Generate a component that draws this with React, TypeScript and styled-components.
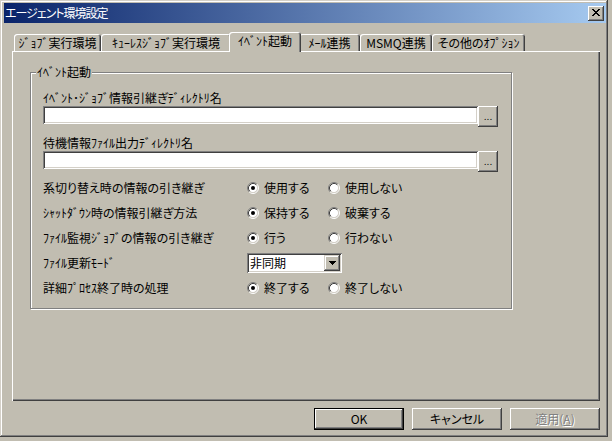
import React from 'react';
import styled, { createGlobalStyle } from 'styled-components';

const FACE = '#c1bdb1';

const GlobalStyle = createGlobalStyle`
  html, body {
    margin: 0;
    padding: 0;
    background: ${FACE};
  }
  body {
    font-family: "Noto Sans CJK JP", "Noto Sans", sans-serif;
    font-size: 12px;
    color: #000;
    font-feature-settings: "palt";
  }
`;

const tabs = [
  { label: 'ｼﾞｮﾌﾞ実行環境', width: 87 },
  { label: 'ｷｭｰﾚｽｼﾞｮﾌﾞ実行環境', width: 130 },
  { label: 'ｲﾍﾞﾝﾄ起動', width: 68, active: true },
  { label: 'ﾒｰﾙ連携', width: 61 },
  { label: 'MSMQ連携', width: 72 },
  { label: 'その他のｵﾌﾟｼｮﾝ', width: 93 }
];

const options = [
  { label: '系切り替え時の情報の引き継ぎ', choices: ['使用する', '使用しない'] },
  { label: 'ｼｬｯﾄﾀﾞｳﾝ時の情報引継ぎ方法', choices: ['保持する', '破棄する'] },
  { label: 'ﾌｧｲﾙ監視ｼﾞｮﾌﾞの情報の引き継ぎ', choices: ['行う', '行わない'] },
  { label: 'ﾌｧｲﾙ更新ﾓｰﾄﾞ', combo: '非同期' },
  { label: '詳細ﾌﾟﾛｾｽ終了時の処理', choices: ['終了する', '終了しない'] }
];

// little pixel drawings
const CloseGlyph = () => (
  <svg width="8" height="7" viewBox="0 0 8 7" shapeRendering="crispEdges">
    <path
      d="M0 0h2v1H0zM6 0h2v1H6zM1 1h2v1H1zM5 1h2v1H5zM2 2h4v1H2zM3 3h2v1H3zM2 4h4v1H2zM1 5h2v1H1zM5 5h2v1H5zM0 6h2v1H0zM6 6h2v1H6z"
      fill="#000"
    />
  </svg>
);

const ArrowGlyph = () => (
  <svg width="7" height="4" viewBox="0 0 7 4" shapeRendering="crispEdges">
    <path d="M0 0h7v1H0zM1 1h5v1H1zM2 2h3v1H2zM3 3h1v1H3z" fill="#000" />
  </svg>
);

const RadioIcon = ({ checked }: { checked?: boolean }) => (
  <svg width="12" height="12" viewBox="0 0 12 12">
    <circle cx="6" cy="6" r="4.5" fill="#fff" />
    <path d="M2.11 9.89A5.5 5.5 0 0 1 9.89 2.11" fill="none" stroke="#808080" />
    <path d="M9.89 2.11A5.5 5.5 0 0 1 2.11 9.89" fill="none" stroke="#fff" />
    <path d="M2.82 9.18A4.5 4.5 0 0 1 9.18 2.82" fill="none" stroke="#404040" />
    <path d="M9.18 2.82A4.5 4.5 0 0 1 2.82 9.18" fill="none" stroke="#d4d0c8" />
    {checked && <circle cx="6" cy="6" r="2" fill="#000" />}
  </svg>
);

export default function App() {
  return (
    <>
      <GlobalStyle />
      <Window>
        <TitleBar>
          <TitleText>エージェント環境設定</TitleText>
          <CloseButton>
            <CloseGlyph />
          </CloseButton>
        </TitleBar>
        <Body>
          <Tabs>
            {tabs.map((t) => (
              <Tab key={t.label} $w={t.width} $active={t.active}>
                {t.label}
              </Tab>
            ))}
          </Tabs>
          <Panel>
            <Group>
              <Legend>ｲﾍﾞﾝﾄ起動</Legend>
              <FieldLabel $top={12}>ｲﾍﾞﾝﾄ･ｼﾞｮﾌﾞ情報引継ぎﾃﾞｨﾚｸﾄﾘ名</FieldLabel>
              <PathRow>
                <TextBox />
                <BrowseButton>...</BrowseButton>
              </PathRow>
              <FieldLabel $top={9}>待機情報ﾌｧｲﾙ出力ﾃﾞｨﾚｸﾄﾘ名</FieldLabel>
              <PathRow>
                <TextBox />
                <BrowseButton>...</BrowseButton>
              </PathRow>
              <OptionGrid>
                {options.map((o) => (
                  <React.Fragment key={o.label}>
                    <OptionLabel>{o.label}</OptionLabel>
                    {o.combo ? (
                      <Combo>
                        <ComboText>{o.combo}</ComboText>
                        <ComboButton>
                          <ArrowGlyph />
                        </ComboButton>
                      </Combo>
                    ) : (
                      o.choices!.map((c, i) => (
                        <Choice key={c}>
                          <RadioIcon checked={i === 0} />
                          <span>{c}</span>
                        </Choice>
                      ))
                    )}
                  </React.Fragment>
                ))}
              </OptionGrid>
            </Group>
          </Panel>
          <ButtonBar>
            <DialogButton $default>OK</DialogButton>
            <DialogButton>キャンセル</DialogButton>
            <DialogButton disabled>
              適用(<u>A</u>)
            </DialogButton>
          </ButtonBar>
        </Body>
      </Window>
    </>
  );
}

const raised = `
  box-shadow: inset -1px -1px #404040, inset 1px 1px #fff, inset -2px -2px #808080;
`;

const sunken = `
  box-shadow: inset 1px 1px #808080, inset -1px -1px #fff, inset 2px 2px #404040, inset -2px -2px #d4d0c8;
`;

const Window = styled.div`
  width: 608px;
  height: 437px;
  box-sizing: border-box;
  padding: 3px 2px 4px 4px;
  background: ${FACE};
  box-shadow: inset -1px -1px #404040, inset 1px 1px #d4d0c8, inset -2px -2px #808080, inset 2px 2px #fff;
  display: flex;
  flex-direction: column;
`;

const TitleBar = styled.div`
  height: 20px;
  display: flex;
  align-items: center;
  justify-content: space-between;
  padding: 0 2px 0 1px;
  background: linear-gradient(to right, #0a246a, #a6caf0);
`;

const TitleText = styled.span`
  color: #fff;
  font-size: 12px;
  letter-spacing: -1px;
  line-height: 20px;
  white-space: nowrap;
`;

const CloseButton = styled.div`
  width: 16px;
  height: 15px;
  box-sizing: border-box;
  background: ${FACE};
  ${raised}
  display: flex;
  align-items: center;
  justify-content: center;
  padding-bottom: 1px;
`;

const Body = styled.div`
  flex: 1;
  display: flex;
  flex-direction: column;
  padding: 9px 6px 0 8px;
`;

const Tabs = styled.div`
  display: flex;
  align-items: flex-end;
  height: 19px;
  padding-left: 2px;
`;

const Tab = styled.div<{ $w: number; $active?: boolean }>`
  position: relative;
  z-index: ${(p) => (p.$active ? 2 : 1)};
  width: ${(p) => p.$w + (p.$active ? 4 : 0)}px;
  height: ${(p) => (p.$active ? 20 : 17)}px;
  margin: ${(p) => (p.$active ? '0 -2px -1px' : '0')};
  box-sizing: border-box;
  flex-shrink: 0;
  background: ${FACE};
  border-radius: 3px 3px 0 0;
  box-shadow: inset 1px 1px #fff, inset -1px 0 #404040, inset -2px 0 #808080;
  display: flex;
  align-items: center;
  justify-content: center;
  padding-bottom: ${(p) => (p.$active ? 2 : 0)}px;
  white-space: nowrap;
  line-height: 14px;
`;

const Panel = styled.div`
  height: 350px;
  box-sizing: border-box;
  padding: 14px 0 0 18px;
  box-shadow: inset 1px 1px #fff, inset -1px -1px #404040, inset -2px -2px #808080;
`;

const Group = styled.fieldset`
  margin: 0;
  width: 482px;
  box-sizing: border-box;
  padding: 0 0 8px 12px;
  border: 1px solid #808080;
  box-shadow: inset 1px 1px #fff, 1px 1px #fff;
  min-inline-size: 0;
`;

const Legend = styled.legend`
  margin-left: -7px;
  padding: 0 1px;
  line-height: 14px;
  background: ${FACE};
`;

const FieldLabel = styled.div<{ $top: number }>`
  margin-top: ${(p) => p.$top}px;
  line-height: 14px;
  height: 14px;
  white-space: nowrap;
`;

const PathRow = styled.div`
  display: flex;
  align-items: flex-start;
  height: 21px;
  margin-top: 1px;
`;

const TextBox = styled.div`
  width: 435px;
  height: 18px;
  background: #fff;
  ${sunken}
`;

const BrowseButton = styled.div`
  width: 20px;
  height: 21px;
  box-sizing: border-box;
  ${raised}
  display: flex;
  align-items: center;
  justify-content: center;
  font-family: "DejaVu Sans", sans-serif;
  font-size: 9px;
  line-height: 1;
  padding-top: 2px;
`;

const OptionGrid = styled.div`
  display: grid;
  grid-template-columns: 204px 81px auto;
  grid-auto-rows: 25px;
  align-items: center;
  margin-top: 3px;
`;

const OptionLabel = styled.div`
  white-space: nowrap;
`;

const Choice = styled.div`
  display: flex;
  align-items: center;
  gap: 5px;
  white-space: nowrap;
`;

const Combo = styled.div`
  grid-column: 2 / 4;
  width: 95px;
  height: 20px;
  box-sizing: border-box;
  background: #fff;
  ${sunken}
  display: flex;
  align-items: center;
  justify-content: space-between;
  padding: 2px;
`;

const ComboText = styled.span`
  padding-left: 1px;
  line-height: 14px;
`;

const ComboButton = styled.div`
  width: 16px;
  height: 16px;
  box-sizing: border-box;
  background: ${FACE};
  box-shadow: inset -1px -1px #404040, inset 1px 1px #d4d0c8, inset -2px -2px #808080, inset 2px 2px #fff;
  display: flex;
  align-items: center;
  justify-content: center;
`;

const ButtonBar = styled.div`
  display: flex;
  justify-content: flex-end;
  gap: 8px;
  margin-top: 7px;
`;

const DialogButton = styled.div<{ $default?: boolean; disabled?: boolean }>`
  width: 90px;
  height: 22px;
  box-sizing: border-box;
  display: flex;
  align-items: center;
  justify-content: center;
  line-height: 14px;
  color: ${(p) => (p.disabled ? '#808080' : '#000')};
  text-shadow: ${(p) => (p.disabled ? '1px 1px #fff' : 'none')};
  border: ${(p) => (p.$default ? '1px solid #000' : 'none')};
  ${raised}
`;
